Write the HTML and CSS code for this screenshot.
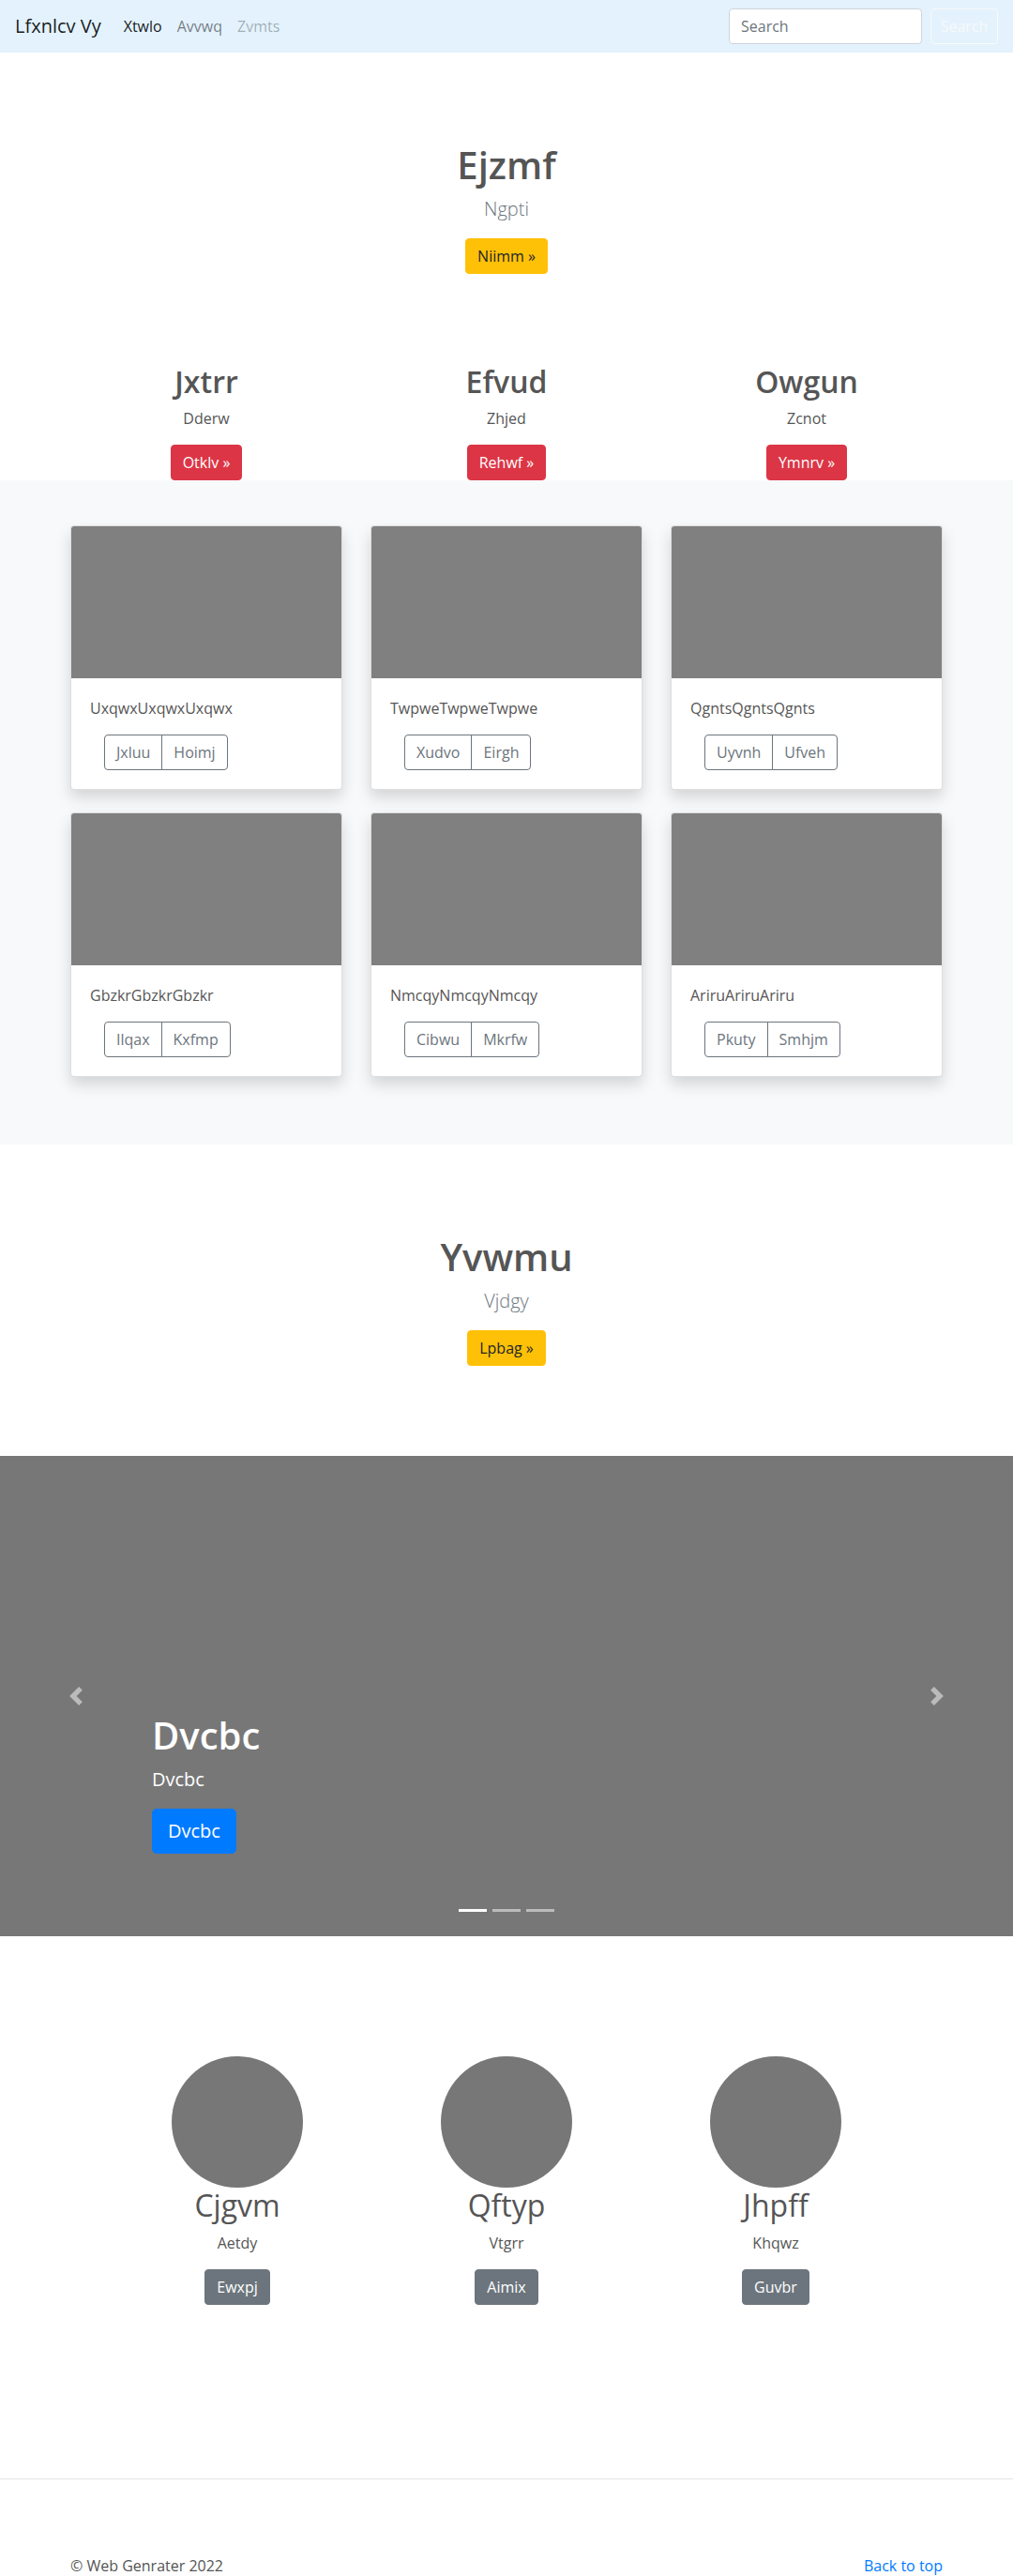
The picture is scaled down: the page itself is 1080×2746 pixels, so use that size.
FILE: index.html
```html
<!DOCTYPE html>
<html lang="en">
<head>
<meta charset="utf-8">
<title>Lfxnlcv Vy</title>
<link rel="stylesheet" href="styles.css">
</head>
<body>
<nav class="navbar">
  <a class="brand" href="#">Lfxnlcv Vy</a>
  <ul class="nav-links">
    <li><a class="nav-link active" href="#">Xtwlo</a></li>
    <li><a class="nav-link" href="#">Avvwq</a></li>
    <li><a class="nav-link disabled" href="#">Zvmts</a></li>
  </ul>
  <form class="search">
    <input class="search-input" type="text" placeholder="Search">
    <button class="btn btn-outline-light" type="button">Search</button>
  </form>
</nav>

<section class="hero">
  <h1 class="hero-title">Ejzmf</h1>
  <p class="lead">Ngpti</p>
  <a class="btn btn-warning" href="#">Niimm »</a>
</section>

<section class="features">
  <div class="feature">
    <h2 class="feature-title">Jxtrr</h2>
    <p class="feature-text">Dderw</p>
    <a class="btn btn-danger" href="#">Otklv »</a>
  </div>
  <div class="feature">
    <h2 class="feature-title">Efvud</h2>
    <p class="feature-text">Zhjed</p>
    <a class="btn btn-danger" href="#">Rehwf »</a>
  </div>
  <div class="feature">
    <h2 class="feature-title">Owgun</h2>
    <p class="feature-text">Zcnot</p>
    <a class="btn btn-danger" href="#">Ymnrv »</a>
  </div>
</section>

<section class="album">
  <div class="card-grid">
    <div class="card">
      <div class="card-img"></div>
      <div class="card-body">
        <p class="card-text">UxqwxUxqwxUxqwx</p>
        <div class="btn-group"><button class="btn btn-outline">Jxluu</button><button class="btn btn-outline">Hoimj</button></div>
      </div>
    </div>
    <div class="card">
      <div class="card-img"></div>
      <div class="card-body">
        <p class="card-text">TwpweTwpweTwpwe</p>
        <div class="btn-group"><button class="btn btn-outline">Xudvo</button><button class="btn btn-outline">Eirgh</button></div>
      </div>
    </div>
    <div class="card">
      <div class="card-img"></div>
      <div class="card-body">
        <p class="card-text">QgntsQgntsQgnts</p>
        <div class="btn-group"><button class="btn btn-outline">Uyvnh</button><button class="btn btn-outline">Ufveh</button></div>
      </div>
    </div>
    <div class="card">
      <div class="card-img"></div>
      <div class="card-body">
        <p class="card-text">GbzkrGbzkrGbzkr</p>
        <div class="btn-group"><button class="btn btn-outline">Ilqax</button><button class="btn btn-outline">Kxfmp</button></div>
      </div>
    </div>
    <div class="card">
      <div class="card-img"></div>
      <div class="card-body">
        <p class="card-text">NmcqyNmcqyNmcqy</p>
        <div class="btn-group"><button class="btn btn-outline">Cibwu</button><button class="btn btn-outline">Mkrfw</button></div>
      </div>
    </div>
    <div class="card">
      <div class="card-img"></div>
      <div class="card-body">
        <p class="card-text">AriruAriruAriru</p>
        <div class="btn-group"><button class="btn btn-outline">Pkuty</button><button class="btn btn-outline">Smhjm</button></div>
      </div>
    </div>
  </div>
</section>

<section class="hero hero-second">
  <h1 class="hero-title">Yvwmu</h1>
  <p class="lead">Vjdgy</p>
  <a class="btn btn-warning" href="#">Lpbag »</a>
</section>

<section class="carousel">
  <a class="carousel-control prev" href="#" aria-label="Previous">
    <svg width="20" height="20" viewBox="0 0 8 8"><path d="M5.25 0l-4 4 4 4 1.5-1.5L4.25 4l2.5-2.5L5.25 0z" fill="#fff"/></svg>
  </a>
  <div class="carousel-caption">
    <h1 class="caption-title">Dvcbc</h1>
    <p class="caption-text">Dvcbc</p>
    <p class="caption-action"><a class="btn btn-lg btn-primary" href="#">Dvcbc</a></p>
  </div>
  <a class="carousel-control next" href="#" aria-label="Next">
    <svg width="20" height="20" viewBox="0 0 8 8"><path d="M2.75 0l-1.5 1.5L3.75 4l-2.5 2.5L2.75 8l4-4-4-4z" fill="#fff"/></svg>
  </a>
  <ol class="indicators">
    <li class="active"></li>
    <li></li>
    <li></li>
  </ol>
</section>

<section class="marketing">
  <div class="person">
    <svg class="avatar" width="140" height="140" viewBox="0 0 140 140"><circle cx="70" cy="70" r="70" fill="#777"/></svg>
    <h2 class="person-name">Cjgvm</h2>
    <p class="person-text">Aetdy</p>
    <a class="btn btn-secondary" href="#">Ewxpj</a>
  </div>
  <div class="person">
    <svg class="avatar" width="140" height="140" viewBox="0 0 140 140"><circle cx="70" cy="70" r="70" fill="#777"/></svg>
    <h2 class="person-name">Qftyp</h2>
    <p class="person-text">Vtgrr</p>
    <a class="btn btn-secondary" href="#">Aimix</a>
  </div>
  <div class="person">
    <svg class="avatar" width="140" height="140" viewBox="0 0 140 140"><circle cx="70" cy="70" r="70" fill="#777"/></svg>
    <h2 class="person-name">Jhpff</h2>
    <p class="person-text">Khqwz</p>
    <a class="btn btn-secondary" href="#">Guvbr</a>
  </div>
</section>

<hr class="divider">

<footer class="footer">
  <p class="copyright">© Web Genrater 2022</p>
  <a class="back-top" href="#">Back to top</a>
</footer>
</body>
</html>
```

FILE: styles.css
```css
* { box-sizing: border-box; }

html, body {
  margin: 0;
  padding: 0;
}

body {
  font-family: "Open Sans", "Noto Sans", "Liberation Sans", sans-serif;
  font-size: 16px;
  line-height: 1.5;
  color: #555;
  background: #fff;
}

a { text-decoration: none; }

/* Navbar */
.navbar {
  display: flex;
  align-items: center;
  height: 56px;
  padding: 8px 16px;
  background: #e3f2fd;
}

.brand {
  font-size: 20px;
  line-height: 30px;
  padding: 5px 0;
  margin-right: 16px;
  color: rgba(0, 0, 0, 0.9);
}

.nav-links {
  display: flex;
  list-style: none;
  margin: 0;
  padding: 0;
}

.nav-link {
  display: block;
  padding: 8px 8px;
  line-height: 24px;
  color: rgba(0, 0, 0, 0.5);
}

.nav-link.active { color: rgba(0, 0, 0, 0.9); }
.nav-link.disabled { color: rgba(0, 0, 0, 0.3); }

.search {
  display: flex;
  margin-left: auto;
}

.search-input {
  width: 206px;
  height: 38px;
  padding: 6px 12px;
  font-family: inherit;
  font-size: 16px;
  color: #495057;
  border: 1px solid #ced4da;
  border-radius: 4px;
  background: #fff;
  margin-right: 9px;
}

.search-input::placeholder { color: #6c757d; }

/* Buttons */
.btn {
  display: inline-block;
  font-family: inherit;
  font-size: 16px;
  line-height: 24px;
  padding: 6px 12px;
  border: 1px solid transparent;
  border-radius: 4px;
  cursor: pointer;
  vertical-align: middle;
}

.btn-outline-light {
  color: #f8f9fa;
  border-color: #f8f9fa;
  background: transparent;
  width: 72px;
  padding: 6px 0;
}

.btn-warning {
  background: #ffc107;
  border-color: #ffc107;
  color: #212529;
}

.btn-danger {
  background: #dc3545;
  border-color: #dc3545;
  color: #fff;
}

.btn-primary {
  background: #007bff;
  border-color: #007bff;
  color: #fff;
}

.btn-secondary {
  background: #6c757d;
  border-color: #6c757d;
  color: #fff;
}

.btn-lg {
  font-size: 20px;
  line-height: 30px;
  padding: 8px 16px;
  border-radius: 5px;
}

/* Hero */
.hero {
  text-align: center;
  padding: 96px 0;
}

.hero-title {
  margin: 0 0 8px;
  font-size: 40px;
  line-height: 48px;
  font-weight: 600;
  color: #555;
}

.lead {
  margin: 0 0 16px;
  font-size: 20px;
  line-height: 30px;
  font-weight: 300;
  color: #6c757d;
}

/* Features */
.features {
  display: grid;
  grid-template-columns: repeat(3, 320px);
  justify-content: center;
  text-align: center;
}

.feature-title {
  margin: 0 0 8px;
  font-size: 32px;
  line-height: 38.4px;
  font-weight: 600;
  color: #555;
}

.feature-text {
  margin: 0 0 16px;
}

/* Album */
.album {
  background: #f8f9fa;
  padding: 48px 0 72px;
}

.card-grid {
  display: grid;
  grid-template-columns: repeat(3, 290px);
  column-gap: 30px;
  row-gap: 24px;
  justify-content: center;
}

.card {
  background: #fff;
  border: 1px solid rgba(0, 0, 0, 0.125);
  border-radius: 4px;
  overflow: hidden;
  box-shadow: 0 8px 16px rgba(0, 0, 0, 0.15);
}

.card-img {
  height: 162px;
  background: #808080;
}

.card-body {
  padding: 20px;
}

.card-text {
  margin: 0 0 16px;
  color: #555;
}

.btn-group {
  display: inline-flex;
  margin-left: 15px;
}

.btn-outline {
  background: transparent;
  color: #6c757d;
  border-color: #6c757d;
}

.btn-group .btn-outline:first-child {
  border-top-right-radius: 0;
  border-bottom-right-radius: 0;
}

.btn-group .btn-outline:last-child {
  margin-left: -1px;
  border-top-left-radius: 0;
  border-bottom-left-radius: 0;
}

/* Carousel */
.carousel {
  position: relative;
  height: 512px;
  background: #777;
}

.carousel-control {
  position: absolute;
  top: 0;
  bottom: 0;
  width: 15%;
  display: flex;
  align-items: center;
  justify-content: center;
  opacity: 0.5;
}

.carousel-control.prev { left: 0; }
.carousel-control.next { right: 0; }

.carousel-caption {
  position: absolute;
  left: 15%;
  right: 15%;
  bottom: 52px;
  padding: 20px 0;
  color: #fff;
  text-align: left;
}

.caption-title {
  margin: 0 0 8px;
  font-size: 40px;
  line-height: 48px;
  font-weight: 600;
}

.caption-text {
  margin: 0 0 16px;
  font-size: 20px;
  line-height: 30px;
}

.caption-action {
  margin: 0 0 16px;
}

.indicators {
  position: absolute;
  left: 0;
  right: 0;
  bottom: 26px;
  display: flex;
  justify-content: center;
  list-style: none;
  margin: 0;
  padding: 0;
}

.indicators li {
  width: 30px;
  height: 3px;
  margin: 0 3px;
  background: #fff;
  opacity: 0.5;
}

.indicators li.active { opacity: 1; }

/* Marketing */
.marketing {
  display: grid;
  grid-template-columns: repeat(3, 287px);
  justify-content: center;
  text-align: center;
  padding: 128px 0 185px;
}

.avatar {
  display: block;
  margin: 0 auto;
}

.person-name {
  margin: 0 0 8px;
  font-size: 32px;
  line-height: 38.4px;
  font-weight: 400;
  color: #555;
}

.person-text {
  margin: 0 0 16px;
}

/* Footer */
.divider {
  margin: 0;
  border: 0;
  border-top: 1px solid rgba(0, 0, 0, 0.1);
}

.footer {
  display: flex;
  justify-content: space-between;
  width: 930px;
  margin: 0 auto;
  padding: 80px 0 32px;
}

.copyright { margin: 0; }

.back-top { color: #007bff; }
```
